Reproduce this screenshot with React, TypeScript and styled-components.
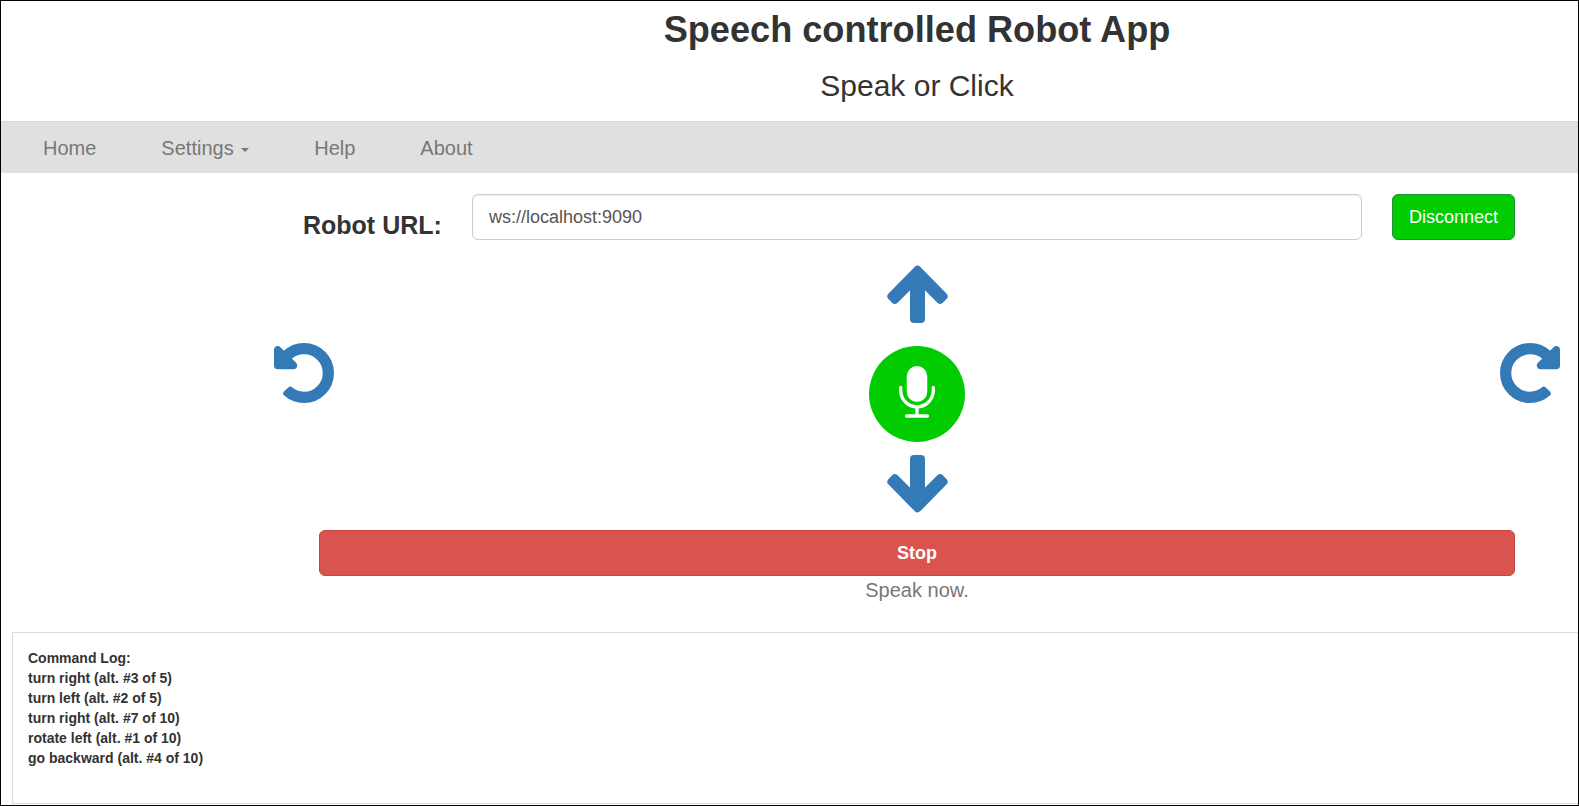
import React from 'react';
import styled, { createGlobalStyle } from 'styled-components';
import { FaRedoAlt, FaUndoAlt } from 'react-icons/fa';

const GlobalStyle = createGlobalStyle`
  html, body {
    margin: 0;
    padding: 0;
    background: #fff;
  }
  * {
    box-sizing: border-box;
  }
`;

const Page = styled.div`
  width: 1579px;
  height: 806px;
  border: 1px solid #000;
  overflow: hidden;
  color: #333;
  font-family: 'Liberation Sans', Arial, sans-serif;
`;

const Header = styled.header`
  height: 120px;
  padding-left: 255px;
  text-align: center;
`;

const Title = styled.h1`
  margin: 0;
  padding-top: 9px;
  font-size: 36.15px;
  line-height: 40px;
  font-weight: 700;
`;

const Subtitle = styled.h3`
  margin: 19px 0 0;
  font-size: 30px;
  line-height: 33px;
  font-weight: 400;
`;

const NavBar = styled.nav`
  display: flex;
  height: 52px;
  padding-left: 9.5px;
  background: #e0e0e0;
  border-top: 1px solid #d8d8d8;
`;

const NavLink = styled.a`
  padding: 0 32.5px;
  font-size: 20px;
  line-height: 53px;
  color: #777;
`;

const Caret = styled.span`
  display: inline-block;
  width: 0;
  height: 0;
  margin-left: 2px;
  vertical-align: middle;
  border-top: 4px solid #777;
  border-left: 4px solid transparent;
  border-right: 4px solid transparent;
`;

const UrlRow = styled.section`
  display: flex;
  align-items: center;
  height: 46px;
  margin-top: 21px;
  padding: 0 63px 0 302px;
`;

const UrlLabel = styled.label`
  width: 169px;
  padding-top: 17px;
  font-size: 25px;
  font-weight: 700;
`;

const UrlInput = styled.input`
  flex: 1;
  height: 46px;
  padding: 0 16px;
  color: #555;
  font: 18px 'Liberation Sans', Arial, sans-serif;
  background: #fff;
  border: 1px solid #ccc;
  border-radius: 6px;
  box-shadow: inset 0 1px 1px rgba(0, 0, 0, 0.075);
`;

const ConnectButton = styled.button`
  width: 123px;
  height: 46px;
  margin-left: 30px;
  padding: 0;
  color: #fff;
  font: 18px 'Liberation Sans', Arial, sans-serif;
  background: #00cc00;
  border: 1px solid #1f8f3a;
  border-radius: 6px;
`;

const Controls = styled.section`
  display: flex;
  flex-direction: column;
  margin-top: 25px;
`;

const ArrowSlot = styled.div`
  display: flex;
  justify-content: center;
  padding-left: 255px;
`;

const ArrowSvg = styled.svg<{ $down?: boolean }>`
  display: block;
  transform: ${props => (props.$down ? 'rotate(180deg)' : 'none')};
`;

const MiddleRow = styled.div`
  display: flex;
  justify-content: space-between;
  height: 96px;
  margin: 23px 0 13px;
  padding: 0 18px 0 273px;
`;

const TurnIcon = styled.div`
  display: flex;
  margin-top: -3px;
  color: #337ab7;
  font-size: 60px;

  svg {
    overflow: visible;
    stroke: currentColor;
    stroke-width: 16;
    stroke-linejoin: round;
  }
`;

const MicButton = styled.div`
  width: 96px;
  height: 96px;
  border-radius: 50%;
  background: #00cc00;
`;

const StopRow = styled.section`
  padding: 17px 63px 0 318px;
  text-align: center;
`;

const StopButton = styled.button`
  display: block;
  width: 100%;
  height: 46px;
  padding: 0;
  color: #fff;
  font: 700 18px 'Liberation Sans', Arial, sans-serif;
  background: #d9534f;
  border: 1px solid #c9433f;
  border-radius: 6px;
`;

const Status = styled.div`
  color: #777;
  font-size: 20px;
  line-height: 28px;
`;

const LogBox = styled.section`
  width: 1570px;
  height: 172px;
  margin: 28px 0 0 11px;
  padding: 15px;
  font-size: 14px;
  font-weight: 700;
  line-height: 20px;
  border: 1px solid #ddd;
`;

const logLines = [
  'Command Log:',
  'turn right (alt. #3 of 5)',
  'turn left (alt. #2 of 5)',
  'turn right (alt. #7 of 10)',
  'rotate left (alt. #1 of 10)',
  'go backward (alt. #4 of 10)',
];

const Arrow = ({ down }: { down?: boolean }) => (
  <ArrowSvg $down={down} width="61" height="58" viewBox="0 0 61 58">
    <polygon
      points="30.5,4.7 56.6,31.3 53.2,34.8 34,15.6 34,54 27,54 27,15.6 7.8,34.8 4.4,31.3"
      fill="#337ab7"
      stroke="#337ab7"
      strokeWidth="8"
      strokeLinejoin="round"
    />
  </ArrowSvg>
);

const MicIcon = () => (
  <svg width="96" height="96" viewBox="0 0 96 96" fill="none">
    <rect x="37.75" y="20" width="20.5" height="36" rx="10.25" fill="#fff" />
    <path
      d="M31.7 41.5v3a16.3 16.3 0 0 0 32.6 0v-3M48 61v9M37.5 70h21"
      stroke="#fff"
      strokeWidth="3.3"
      strokeLinecap="round"
    />
  </svg>
);

const App = () => (
  <Page>
    <GlobalStyle />
    <Header>
      <Title>Speech controlled Robot App</Title>
      <Subtitle>Speak or Click</Subtitle>
    </Header>
    <NavBar>
      <NavLink>Home</NavLink>
      <NavLink>
        Settings <Caret />
      </NavLink>
      <NavLink>Help</NavLink>
      <NavLink>About</NavLink>
    </NavBar>
    <UrlRow>
      <UrlLabel>Robot URL:</UrlLabel>
      <UrlInput defaultValue="ws://localhost:9090" />
      <ConnectButton>Disconnect</ConnectButton>
    </UrlRow>
    <Controls>
      <ArrowSlot>
        <Arrow />
      </ArrowSlot>
      <MiddleRow>
        <TurnIcon>
          <FaUndoAlt />
        </TurnIcon>
        <MicButton>
          <MicIcon />
        </MicButton>
        <TurnIcon>
          <FaRedoAlt />
        </TurnIcon>
      </MiddleRow>
      <ArrowSlot>
        <Arrow down />
      </ArrowSlot>
    </Controls>
    <StopRow>
      <StopButton>Stop</StopButton>
      <Status>Speak now.</Status>
    </StopRow>
    <LogBox>
      {logLines.map(line => (
        <div key={line}>{line}</div>
      ))}
    </LogBox>
  </Page>
);

export default App;
